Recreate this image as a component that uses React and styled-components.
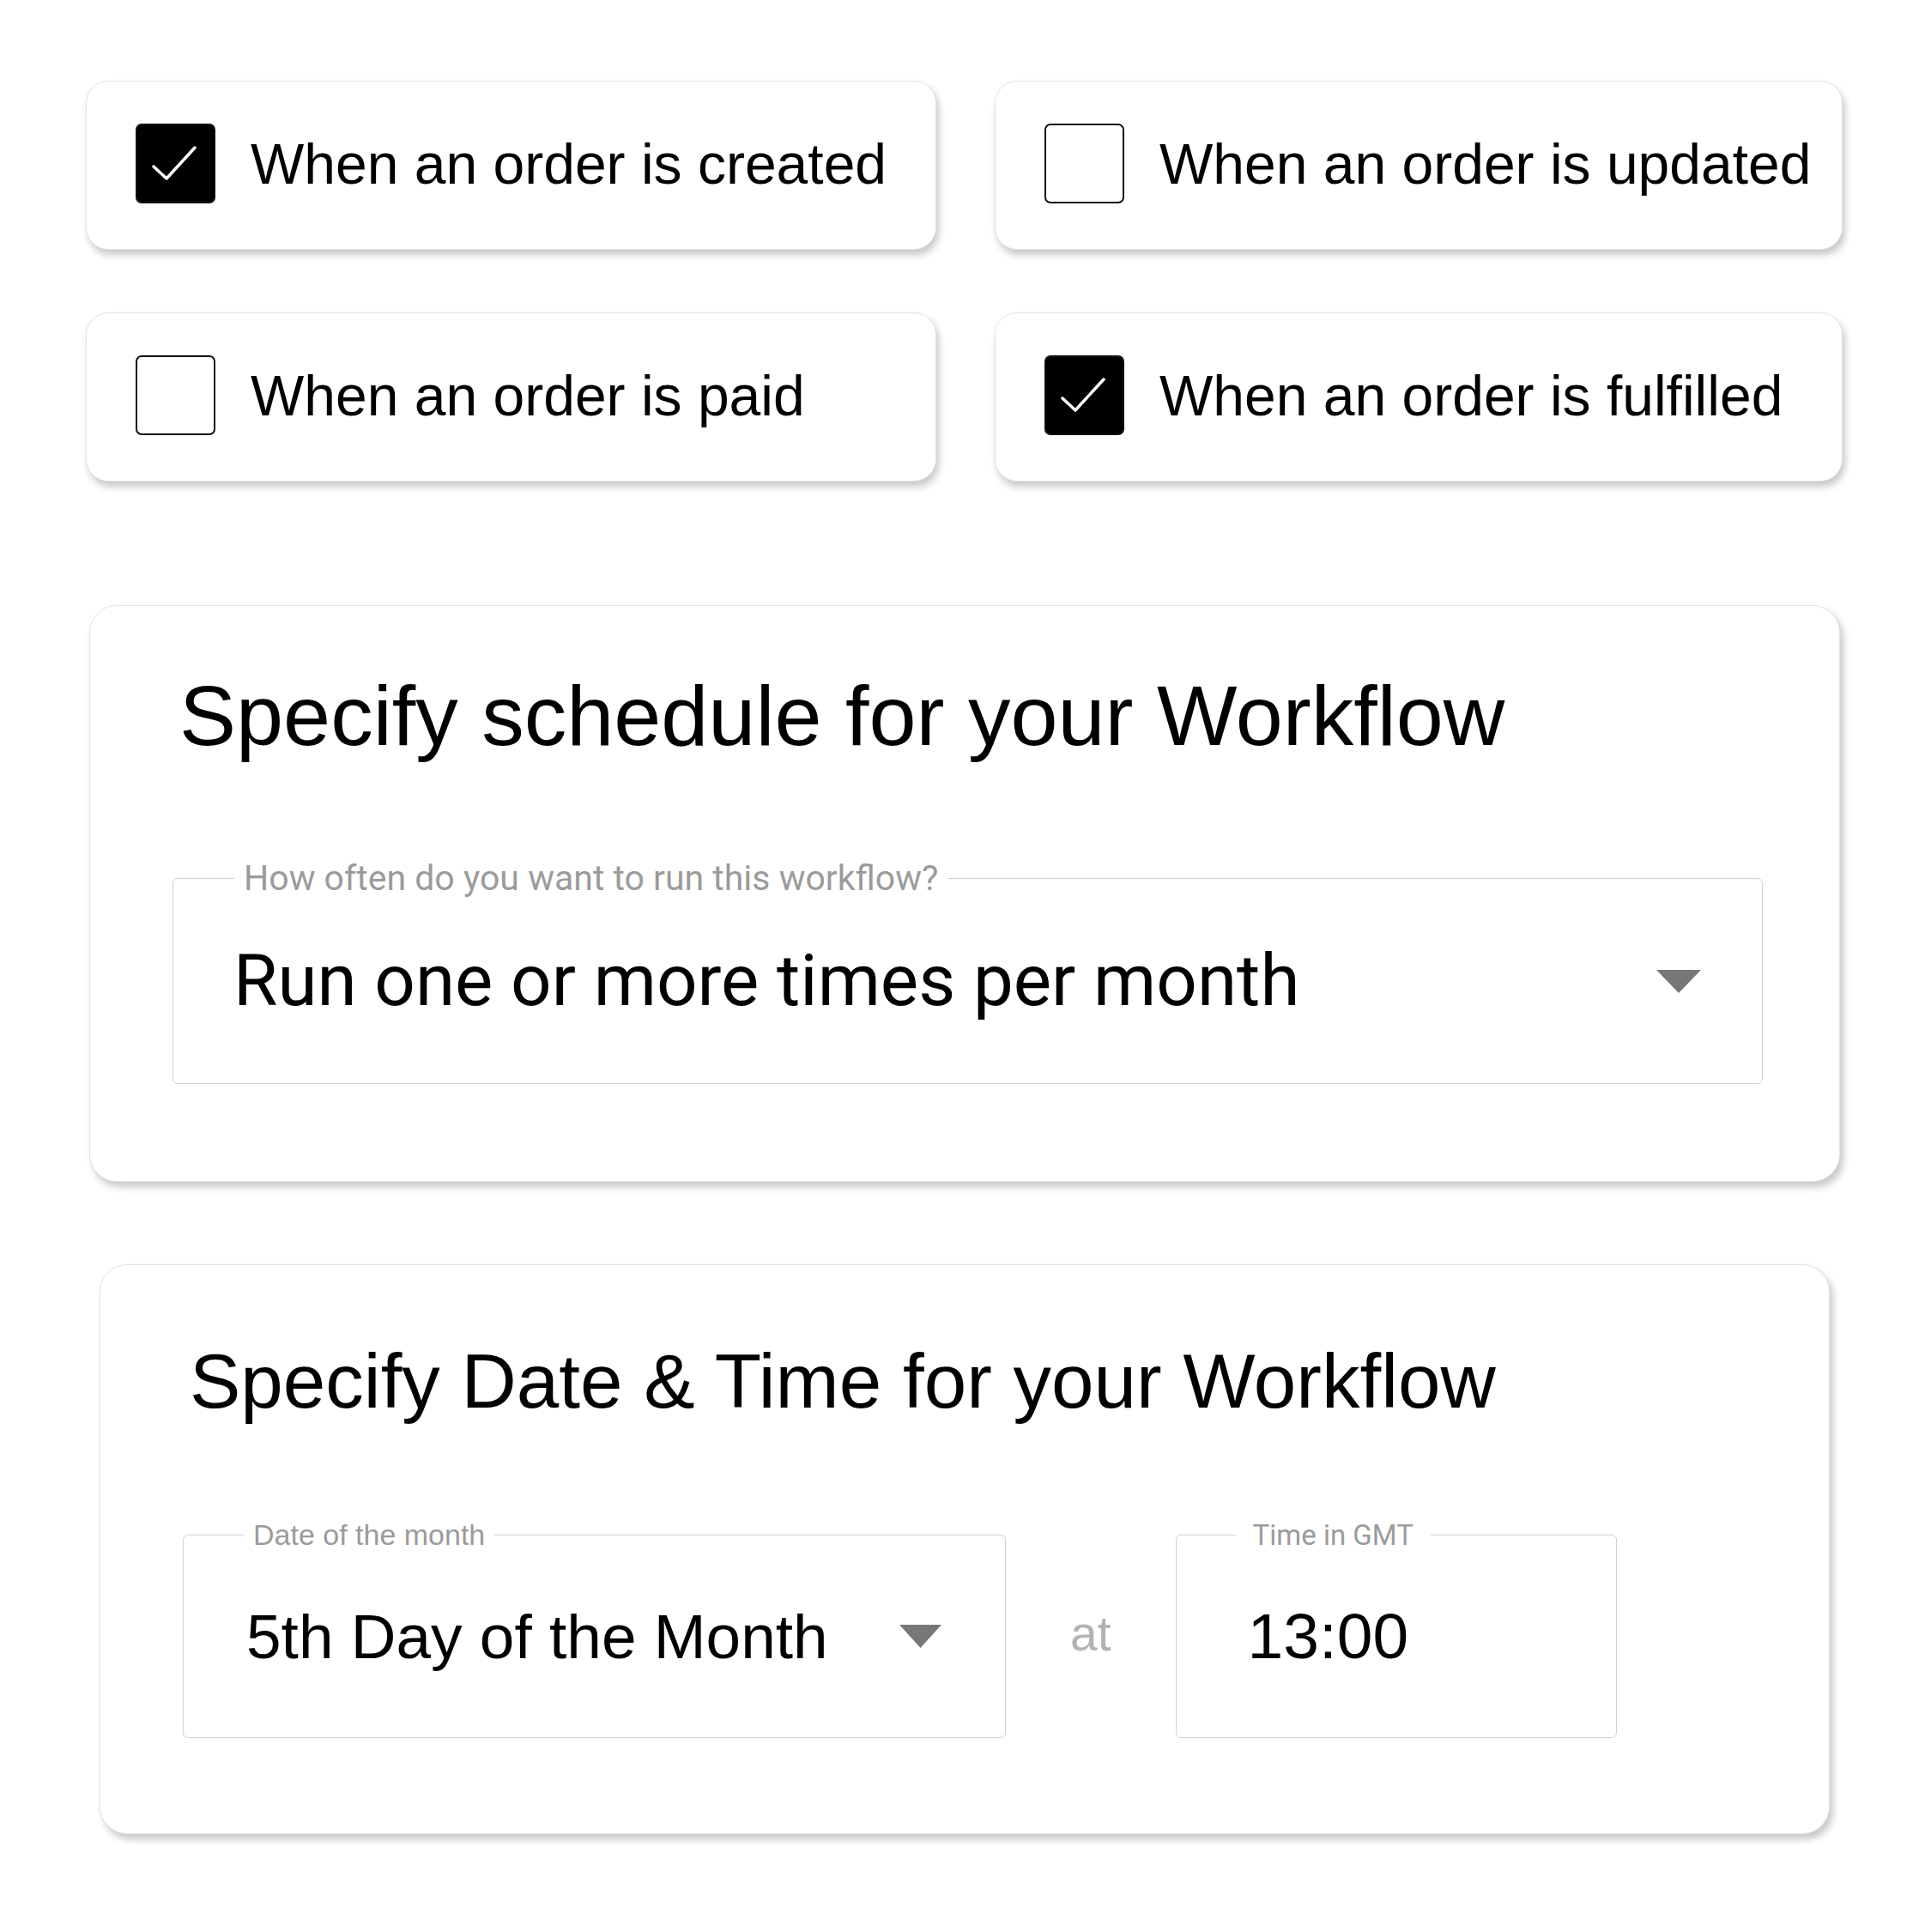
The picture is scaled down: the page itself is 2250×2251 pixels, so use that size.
import React from "react";
import styled, { createGlobalStyle } from "styled-components";

const GlobalStyle = createGlobalStyle`
  html, body {
    margin: 0;
    padding: 0;
    background: #ffffff;
  }
  body {
    font-family: "Liberation Sans", Arial, sans-serif;
    color: #000000;
  }
  * {
    box-sizing: border-box;
  }
`;

const triggers = [
  { label: "When an order is created", checked: true },
  { label: "When an order is updated", checked: false },
  { label: "When an order is paid", checked: false },
  { label: "When an order is fulfilled", checked: true },
];

const Page = styled.main`
  display: flex;
  flex-direction: column;
  align-items: flex-start;
  padding: 94px 98px 110px 100px;
`;

const TriggerGrid = styled.div`
  display: grid;
  grid-template-columns: 991px 988px;
  grid-auto-rows: 197px;
  column-gap: 68px;
  row-gap: 73px;
`;

const TriggerCard = styled.label`
  display: flex;
  align-items: center;
  gap: 41px;
  padding: 0 0 4px 57px;
  background: #ffffff;
  border: 1px solid #e4e4e4;
  border-radius: 26px;
  box-shadow: 3px 6px 8px rgba(0, 0, 0, 0.22);
`;

const CheckboxWrap = styled.span`
  position: relative;
  flex: none;
  display: flex;
  align-items: center;
  justify-content: center;
`;

const Checkbox = styled.span`
  flex: none;
  width: 93px;
  height: 93px;
  border-radius: 7px;
  border: 2px solid #111111;
  background: ${(p) => (p.$checked ? "#000000" : "#ffffff")};
`;

const TriggerText = styled.span`
  font-family: "Liberation Sans", Arial, sans-serif;
  font-size: 66px;
  line-height: 1;
  color: #000000;
  white-space: nowrap;
`;

const Card = styled.section`
  width: ${(p) => p.$width}px;
  margin-top: ${(p) => p.$top}px;
  margin-left: ${(p) => p.$inset}px;
  padding: ${(p) => p.$padTop}px 89px ${(p) => p.$padBottom}px 96px;
  background: #ffffff;
  border: 1px solid #e4e4e4;
  border-radius: 32px;
  box-shadow: 4px 6px 9px rgba(0, 0, 0, 0.22);
  display: flex;
  flex-direction: column;
`;

const Title = styled.h2`
  margin: 0 0 ${(p) => p.$gap}px;
  padding-left: 8px;
  font-family: "Liberation Sans", Arial, sans-serif;
  font-weight: 400;
  font-size: ${(p) => p.$size}px;
  line-height: 1;
  color: #000000;
  white-space: nowrap;
`;

const Field = styled.div`
  position: relative;
  flex: none;
  width: ${(p) => (p.$width ? `${p.$width}px` : "auto")};
  height: ${(p) => p.$height}px;
  padding: 0 ${(p) => p.$padRight}px 0 ${(p) => p.$padLeft}px;
  border: 1px solid #d2d2d2;
  border-radius: 6px;
  display: flex;
  align-items: center;
  justify-content: space-between;
`;

const Legend = styled.span`
  position: absolute;
  top: ${(p) => -p.$size / 2 - 1}px;
  left: ${(p) => p.$left}px;
  padding: 0 ${(p) => p.$pad}px;
  background: #ffffff;
  font-family: ${(p) => p.$font};
  font-size: ${(p) => p.$size}px;
  line-height: 1;
  color: #9b9b9b;
  white-space: nowrap;
`;

const Value = styled.span`
  font-family: ${(p) => p.$font};
  font-size: ${(p) => p.$size}px;
  line-height: 1;
  color: #000000;
  white-space: nowrap;
`;

const DateRow = styled.div`
  display: flex;
  align-items: center;
  gap: 75px;
`;

const At = styled.span`
  font-family: "Liberation Sans", Arial, sans-serif;
  font-size: 57px;
  line-height: 1;
  color: #b3b3b3;
  padding-bottom: 6px;
`;

const Check = () => (
  <svg width="93" height="93" viewBox="0 0 93 93" style={{ position: "absolute" }}>
    <polyline
      points="21,50 36,64 69,28"
      fill="none"
      stroke="#ffffff"
      strokeWidth="3.5"
      strokeLinecap="round"
      strokeLinejoin="round"
    />
  </svg>
);

const Caret = ({ w, h }) => (
  <svg width={w} height={h} viewBox={`0 0 ${w} ${h}`}>
    <polygon points={`0,0 ${w},0 ${w / 2},${h}`} fill="#777777" />
  </svg>
);

const roboto = 'Roboto, "Liberation Sans", sans-serif';
const helvetica = '"Liberation Sans", Arial, sans-serif';

export default function App() {
  return (
    <>
      <GlobalStyle />
      <Page>
        <TriggerGrid>
          {triggers.map((t) => (
            <TriggerCard key={t.label}>
              <CheckboxWrap>
                <Checkbox $checked={t.checked} />
                {t.checked && <Check />}
              </CheckboxWrap>
              <TriggerText>{t.label}</TriggerText>
            </TriggerCard>
          ))}
        </TriggerGrid>

        <Card $width={2040} $top={144} $inset={4} $padTop={78} $padBottom={113}>
          <Title $size={99} $gap={140}>Specify schedule for your Workflow</Title>
          <Field $height={240} $padLeft={70} $padRight={71}>
            <Legend $left={71} $pad={11} $size={41} $font={roboto}>
              How often do you want to run this workflow?
            </Legend>
            <Value $size={83.5} $font={roboto}>
              Run one or more times per month
            </Value>
            <Caret w={52} h={27} />
          </Field>
        </Card>

        <Card $width={2016} $top={96} $inset={16} $padTop={91} $padBottom={111}>
          <Title $size={89} $gap={134}>Specify Date &amp; Time for your Workflow</Title>
          <DateRow>
            <Field $width={959} $height={237} $padLeft={73} $padRight={74}>
              <Legend $left={71} $pad={10} $size={34} $font={helvetica}>
                Date of the month
              </Legend>
              <Value $size={73} $font={helvetica}>
                5th Day of the Month
              </Value>
              <Caret w={49} h={27} />
            </Field>
            <At>at</At>
            <Field $width={514} $height={237} $padLeft={83} $padRight={20}>
              <Legend $left={69} $pad={20} $size={33} $font={roboto}>
                Time in GMT
              </Legend>
              <Value $size={75} $font={helvetica}>
                13:00
              </Value>
            </Field>
          </DateRow>
        </Card>
      </Page>
    </>
  );
}
